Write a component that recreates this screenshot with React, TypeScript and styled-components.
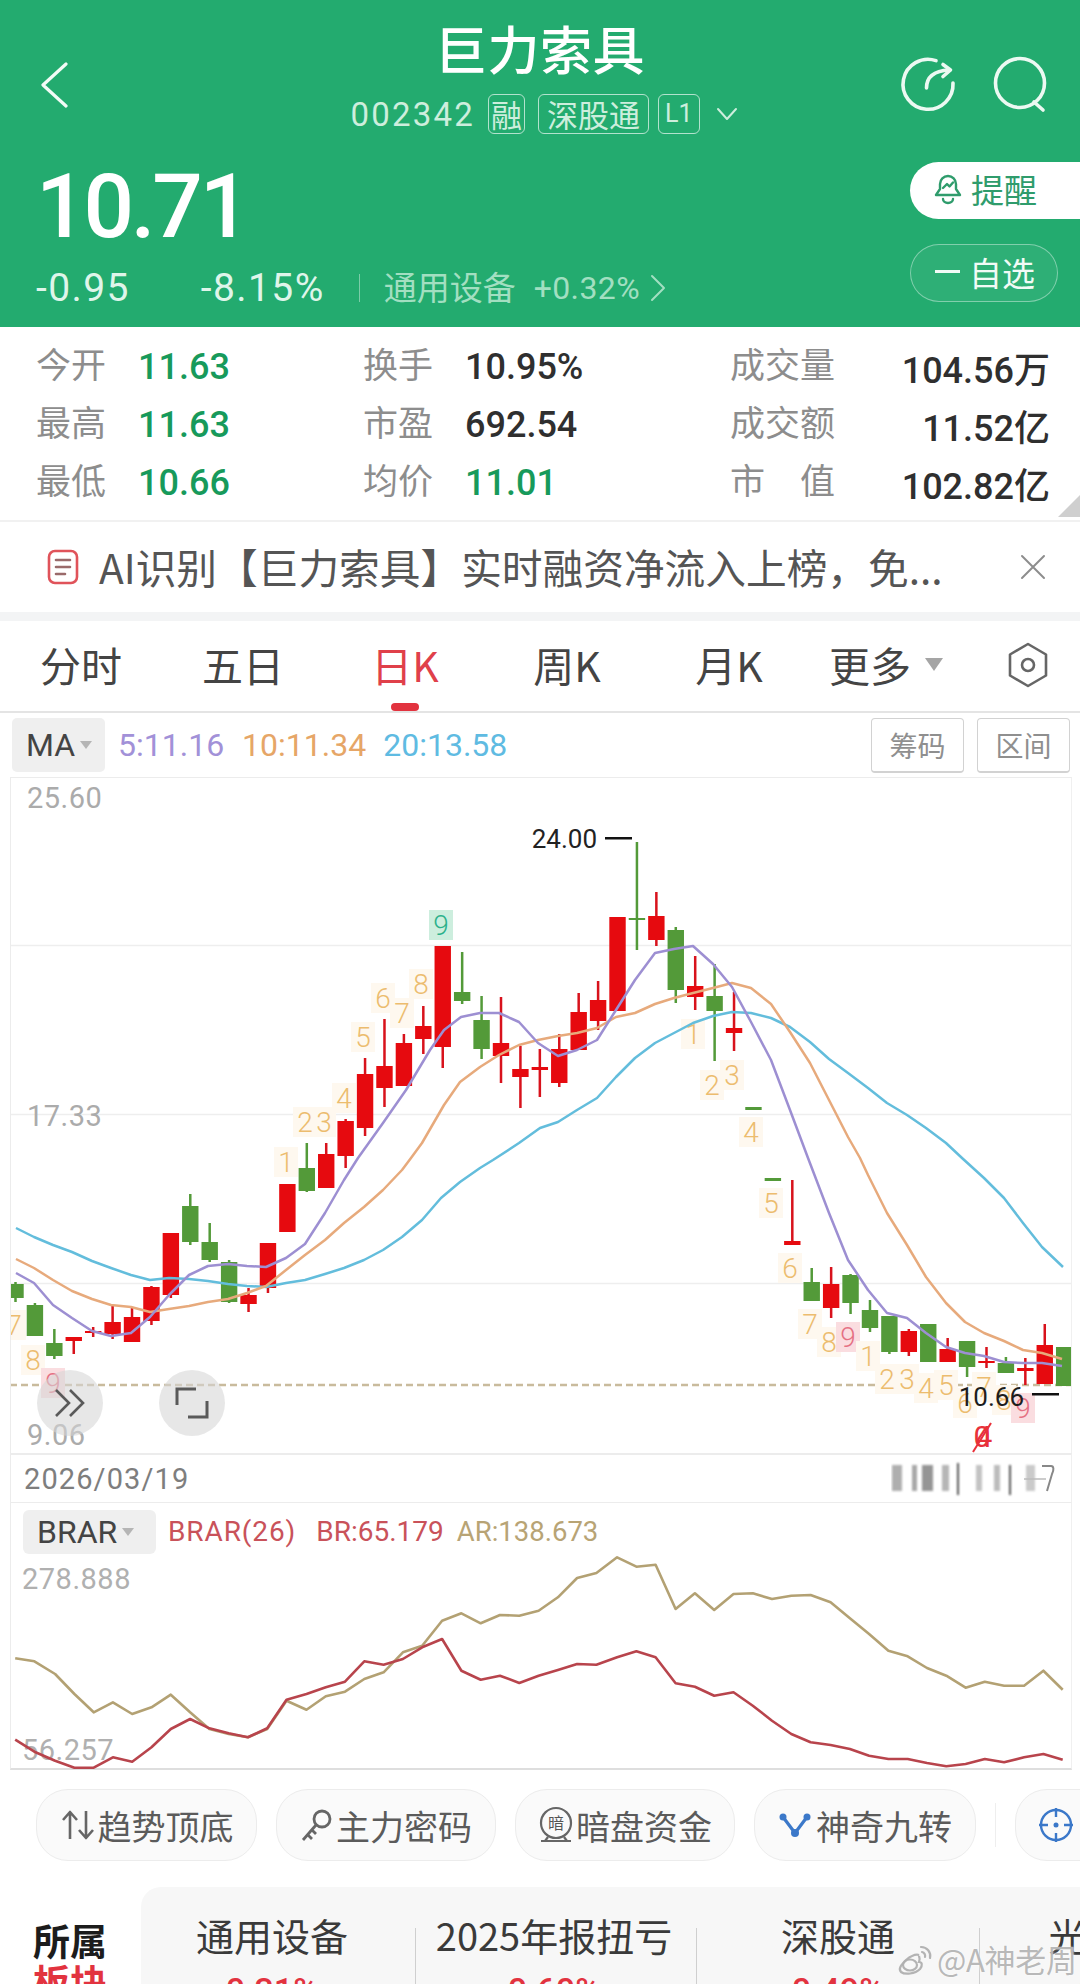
import React from 'react';
import styled, { createGlobalStyle } from 'styled-components';

const CJK = `"Noto Sans CJK SC", "Noto Sans", sans-serif`;
const NUM = `Roboto, "Noto Sans CJK SC", sans-serif`;

const Global = createGlobalStyle`
  html, body { margin: 0; padding: 0; background: #fff; }
  * { box-sizing: border-box; }
`;

const Page = styled.div`
  position: relative;
  width: 1080px;
  height: 1984px;
  overflow: hidden;
  background: #fff;
  font-family: ${CJK};
  color: #333;
`;

/* ---------- header ---------- */
const Header = styled.header`
  height: 327px;
  background: #23ab6f;
  color: #fff;
  display: flex;
  flex-direction: column;
`;
const TopBar = styled.div`
  height: 150px;
  display: grid;
  grid-template-columns: 1fr auto 1fr;
`;
const BackCell = styled.div`
  padding: 62px 0 0 40px;
`;
const TitleBlock = styled.div`
  padding-top: 18px;
  display: flex;
  flex-direction: column;
  align-items: center;
`;
const Title = styled.div`
  font-size: 52px;
  line-height: 60px;
  font-weight: 500;
  letter-spacing: 0.5px;
`;
const SubRow = styled.div`
  margin: 16px 0 0 8px;
  height: 40px;
  display: flex;
  align-items: center;
  gap: 11px;
  color: #cdeedd;
`;
const Code = styled.span`
  font-family: ${NUM};
  font-size: 33px;
  letter-spacing: 2.2px;
  margin-right: 2px;
`;
const Badge = styled.span`
  height: 40px;
  padding: 0 2px;
  border: 1px solid rgba(255, 255, 255, 0.65);
  border-radius: 6px;
  font-size: 31px;
  line-height: 36px;
  font-family: ${CJK};
  display: flex;
  align-items: center;
`;
const WideBadge = styled(Badge)`
  margin-left: 2px;
  padding: 0 8px;
`;
const L1Badge = styled(Badge)`
  margin-left: -2px;
  font-family: ${NUM};
  font-size: 25px;
  padding: 0 6px;
`;
const ActionCell = styled.div`
  display: flex;
  justify-content: flex-end;
  align-items: flex-start;
  gap: 34px;
  padding: 54px 28px 0 0;
`;
const PriceRow = styled.div`
  flex: 1;
  display: flex;
  justify-content: space-between;
`;
const PriceCol = styled.div`
  display: flex;
  flex-direction: column;
  padding: 7px 0 0 36px;
`;
const Price = styled.div`
  font-family: ${NUM};
  font-size: 89px;
  line-height: 100px;
  font-weight: 500;
  letter-spacing: -3.2px;
`;
const ChangeRow = styled.div`
  margin-top: 13px;
  display: flex;
  align-items: center;
  height: 36px;
  font-family: ${NUM};
  font-size: 39px;
  letter-spacing: 1.4px;
  color: #dff5ea;
`;
const ChangePct = styled.span`
  margin-left: 71px;
`;
const Sep = styled.span`
  width: 1px;
  height: 28px;
  background: rgba(255, 255, 255, 0.4);
  margin: 0 24px 0 34px;
`;
const Sector = styled.span`
  font-family: ${CJK};
  font-size: 33px;
  letter-spacing: 0;
  margin-bottom: 4px;
  color: #a2dfc1;
`;
const SectorPct = styled.span`
  font-size: 32px;
  letter-spacing: 0.4px;
  margin-left: 18px;
  color: #a2dfc1;
`;
const BtnCol = styled.div`
  width: 170px;
  padding-top: 12px;
  display: flex;
  flex-direction: column;
  gap: 25px;
`;
const RemindBtn = styled.div`
  height: 57px;
  background: #fff;
  border-radius: 29px 0 0 29px;
  color: #2f9c6c;
  font-size: 33px;
  line-height: 40px;
  display: flex;
  align-items: center;
  padding: 0 0 3px 22px;
  gap: 7px;
`;
const WatchBtn = styled.div`
  width: 148px;
  height: 58px;
  border: 1.5px solid rgba(255, 255, 255, 0.4);
  background: rgba(255, 255, 255, 0.05);
  border-radius: 29px;
  font-size: 33px;
  line-height: 40px;
  display: flex;
  align-items: center;
  padding: 0 0 3px 24px;
  gap: 9px;
  color: #f1fbf6;
`;
const MinusBar = styled.span`
  width: 25px;
  height: 3px;
  background: #f1fbf6;
`;

/* ---------- stats ---------- */
const Stats = styled.section`
  position: relative;
  height: 195px;
  padding: 8px 30px 0 36px;
  display: grid;
  grid-template-columns: 102px 225px 102px 265px 110px 1fr;
  grid-auto-rows: 58px;
  align-items: center;
  border-bottom: 2px solid #f1f1f1;
`;
const StatLabel = styled.span`
  font-size: 35px;
  padding-bottom: 4px;
  color: #8d8d8d;
  white-space: pre;
`;
const WideLabel = styled(StatLabel)`
  display: flex;
  justify-content: space-between;
  width: 105px;
`;
const StatValue = styled.span<{ $green?: boolean; $right?: boolean }>`
  font-family: ${NUM};
  font-size: 36px;
  font-weight: 500;
  padding-top: 5px;
  color: ${(p) => (p.$green ? '#179a5b' : '#2f2f2f')};
  text-align: ${(p) => (p.$right ? 'right' : 'left')};
  white-space: nowrap;
`;
const Corner = styled.span`
  position: absolute;
  right: 0;
  bottom: 3px;
  width: 0;
  height: 0;
  border-style: solid;
  border-width: 0 0 22px 22px;
  border-color: transparent transparent #cfcfcf transparent;
`;

/* ---------- ai notice ---------- */
const Notice = styled.section`
  height: 90px;
  display: flex;
  align-items: center;
  padding-left: 47px;
  gap: 20px;
`;
const NoticeText = styled.span`
  width: 901px;
  font-size: 40.7px;
  line-height: 52px;
  color: #555;
  white-space: nowrap;
`;
const Gap = styled.div`
  height: 9px;
  background: #f3f4f5;
`;

/* ---------- tabs ---------- */
const Tabs = styled.nav`
  height: 92px;
  display: grid;
  grid-template-columns: repeat(5, 162px) 152px 1fr;
  border-bottom: 2px solid #e4e4e4;
`;
const Tab = styled.div<{ $active?: boolean }>`
  position: relative;
  display: flex;
  align-items: center;
  justify-content: center;
  font-size: 41px;
  padding-bottom: 4px;
  gap: 14px;
  color: ${(p) => (p.$active ? '#e0404a' : '#444')};
  ${(p) =>
    p.$active
      ? `&::after{content:"";position:absolute;left:67px;bottom:0;width:28px;height:8px;border-radius:4px;background:#e2333f;}`
      : ''}
`;
const TabTri = styled.span`
  width: 0;
  height: 0;
  border-style: solid;
  border-width: 13px 9px 0 9px;
  border-color: #a5a5a5 transparent transparent transparent;
`;
const TabGear = styled.div`
  display: flex;
  align-items: center;
  justify-content: center;
  padding: 0 0 2px 14px;
`;

/* ---------- MA row ---------- */
const IndicatorRow = styled.div`
  height: 64px;
  display: flex;
  align-items: center;
  padding: 0 10px 0 12px;
`;
const Selector = styled.div<{ $w: number }>`
  width: ${(p) => p.$w}px;
  height: 54px;
  background: #efefef;
  border-radius: 5px;
  display: flex;
  align-items: center;
  padding-left: 14px;
  gap: 5px;
  font-family: ${NUM};
  font-size: 32px;
  color: #444;
`;
const SmallTri = styled.span`
  width: 0;
  height: 0;
  border-style: solid;
  border-width: 8px 6px 0 6px;
  border-color: #b5b5b5 transparent transparent transparent;
`;
const Legend = styled.span<{ $color: string; $ml: number; $size?: number; $ls?: number }>`
  font-family: ${NUM};
  font-size: ${(p) => p.$size ?? 32}px;
  letter-spacing: ${(p) => p.$ls ?? 0}px;
  color: ${(p) => p.$color};
  margin-left: ${(p) => p.$ml}px;
  white-space: nowrap;
`;
const RangeBtns = styled.div`
  margin-left: auto;
  display: flex;
  gap: 13px;
`;
const RangeBtn = styled.div`
  width: 93px;
  height: 55px;
  border: 1px solid #d2d2d2;
  border-bottom-width: 2px;
  border-radius: 4px;
  color: #8f8f8f;
  font-size: 28px;
  display: flex;
  align-items: center;
  justify-content: center;
`;

/* ---------- k chart ---------- */
const PlotFrame = styled.div`
  position: relative;
  margin-left: 10px;
  width: 1062px;
  height: 676px;
  border: 1px solid #ececec;
  border-bottom: 0;
  border-right-color: #f0f0f0;
  overflow: hidden;
`;
const PlotSvg = styled.svg`
  display: block;
  margin-top: -1px;
`;
const FloatRound = styled.div<{ $left: number }>`
  position: absolute;
  left: ${(p) => p.$left}px;
  top: 592px;
  width: 66px;
  height: 66px;
  border-radius: 50%;
  background: rgba(214, 214, 214, 0.58);
  display: flex;
  align-items: center;
  justify-content: center;
`;
const DateRow = styled.div`
  margin-left: 10px;
  width: 1062px;
  height: 50px;
  border: 1px solid #ececec;
  border-top: 2px solid #ececec;
  border-right-color: #f0f0f0;
  display: flex;
  align-items: center;
  justify-content: space-between;
  padding: 0 8px 0 13px;
`;
const DateText = styled.span`
  font-family: ${NUM};
  font-size: 29px;
  letter-spacing: 1.1px;
  color: #7e7e7e;
`;

/* ---------- brar ---------- */
const SubChart = styled.div`
  margin-left: 10px;
  width: 1062px;
  height: 267px;
  border-right: 1px solid #f0f0f0;
  border-left: 1px solid #ececec;
  border-bottom: 2px solid #dedede;
  display: flex;
  flex-direction: column;
`;
const SubHead = styled.div`
  height: 54px;
  padding: 5px 0 0 12px;
  display: flex;
  align-items: center;
`;
const BrarSelector = styled(Selector)`
  height: 44px;
  font-size: 32px;
  border-radius: 6px;
`;
const SubSvg = styled.svg`
  display: block;
  overflow: visible;
`;

/* ---------- pills ---------- */
const PillRow = styled.div`
  height: 117px;
  padding: 19px 0 0 36px;
  display: flex;
  align-items: flex-start;
  gap: 19px;
`;
const Pill = styled.div<{ $w?: number }>`
  flex: 0 0 ${(p) => p.$w ?? 221}px;
  height: 72px;
  border: 1.5px solid #ececec;
  background: #fafafa;
  border-radius: 32px;
  display: flex;
  align-items: center;
  justify-content: center;
  gap: 2px;
  font-size: 34px;
  color: #5b5b5b;
  white-space: nowrap;
`;
const PillSep = styled.span`
  flex: none;
  width: 1px;
  height: 44px;
  margin: 14px 0 0 0;
  background: #eee;
`;
const LastPill = styled(Pill)`
  justify-content: flex-start;
  padding-left: 22px;
`;

/* ---------- bottom ---------- */
const Bottom = styled.section`
  display: flex;
  height: 97px;
`;
const SideHead = styled.div`
  flex: 0 0 141px;
  padding: 33px 0 0 33px;
  font-size: 37px;
  line-height: 41px;
  font-weight: 700;
  color: #1c1c1c;
`;
const SideRed = styled.span`
  display: block;
  color: #e2333f;
`;
const Panel = styled.div`
  flex: 1;
  display: flex;
  background: #f7f7f7;
  border-top-left-radius: 20px;
  overflow: hidden;
`;
const Concept = styled.div<{ $w: number; $first?: boolean; $pr?: number }>`
  flex: 0 0 ${(p) => p.$w}px;
  margin-top: 41px;
  height: 60px;
  padding-right: ${(p) => p.$pr ?? 0}px;
  text-align: center;
  border-left: ${(p) => (p.$first ? '0' : '1px solid #cfcfcf')};
`;
const ConceptName = styled.div`
  font-size: 38px;
  line-height: 14px;
  color: #3a3a3a;
  white-space: nowrap;
`;
const ConceptValue = styled.div`
  margin-top: 22px;
  font-family: ${NUM};
  font-weight: 500;
  font-size: 34px;
  line-height: 52px;
  color: #e2333f;
`;
const Watermark = styled.div`
  position: absolute;
  left: 895px;
  top: 1941px;
  display: flex;
  align-items: center;
  gap: 2px;
  font-size: 31px;
  line-height: 36px;
  letter-spacing: -0.3px;
  color: rgba(178, 178, 178, 0.92);
  text-shadow: 0 0 2px rgba(255, 255, 255, 0.9);
  white-space: nowrap;
`;

/* ---------- data ---------- */
const X0 = 15.5;
const DX = 19.42;
type C = ['r' | 'g', number, number, number, number];
const candles: C[] = [
  ['g', 1282, 1284, 1298, 1302], ['g', 1303, 1305, 1336, 1336], ['g', 1329, 1343, 1356, 1359],
  ['r', 1337, 1337, 1341, 1354], ['r', 1327, 1331, 1333, 1337], ['r', 1305, 1322, 1334, 1339],
  ['r', 1308, 1317, 1342, 1342], ['r', 1286, 1287, 1321, 1325], ['r', 1233, 1233, 1295, 1298],
  ['g', 1194, 1206, 1242, 1245], ['g', 1223, 1242, 1260, 1262], ['g', 1260, 1262, 1302, 1303],
  ['r', 1288, 1295, 1304, 1312], ['r', 1243, 1243, 1288, 1293], ['r', 1184, 1184, 1232, 1232],
  ['g', 1143, 1168, 1191, 1192], ['r', 1143, 1154, 1188, 1188], ['r', 1119, 1121, 1156, 1168],
  ['r', 1058, 1074, 1128, 1136], ['r', 1019, 1066, 1088, 1107], ['r', 1034, 1043, 1086, 1086],
  ['r', 1006, 1026, 1039, 1054], ['r', 946, 946, 1047, 1068], ['g', 952, 992, 1001, 1004],
  ['g', 996, 1020, 1049, 1059], ['r', 997, 1043, 1056, 1083], ['r', 1046, 1069, 1077, 1108],
  ['r', 1049, 1067, 1070, 1097], ['r', 1034, 1049, 1083, 1087], ['r', 993, 1012, 1050, 1050],
  ['r', 981, 1000, 1021, 1030], ['r', 917, 917, 1011, 1011], ['g', 842, 918, 920, 950],
  ['r', 892, 916, 940, 946], ['g', 927, 930, 990, 1003], ['r', 956, 986, 997, 1010],
  ['g', 964, 996, 1011, 1061], ['r', 992, 1028, 1033, 1051], ['g', 1107, 1107, 1110, 1110],
  ['g', 1178, 1178, 1181, 1181], ['r', 1180, 1241, 1245, 1245], ['g', 1268, 1282, 1301, 1301],
  ['r', 1267, 1284, 1308, 1318], ['g', 1274, 1275, 1303, 1314], ['g', 1300, 1310, 1328, 1332],
  ['g', 1316, 1316, 1352, 1354], ['r', 1329, 1331, 1352, 1356], ['g', 1324, 1324, 1362, 1362],
  ['r', 1338, 1349, 1362, 1362], ['g', 1341, 1341, 1367, 1377], ['r', 1347, 1361, 1363, 1368],
  ['g', 1357, 1363, 1373, 1373], ['r', 1358, 1368, 1371, 1385], ['r', 1324, 1345, 1384, 1384],
  ['g', 1347, 1347, 1386, 1386],
];
const pts = (a: number[]) => {
  const out: string[] = [];
  for (let i = 0; i < a.length; i += 2) out.push(`${a[i]},${a[i + 1]}`);
  return out.join(' ');
};
const ma5 = [16,1273,34,1283,53,1305,72,1318,92,1331,111,1336,131,1333,150,1317,169,1295,189,1275,208,1266,228,1264,247,1266,266,1267,286,1258,305,1244,325,1213,344,1180,358,1158,383,1123,406,1090,430,1050,444,1030,461,1017,480,1013,499,1013,519,1022,538,1043,558,1056,577,1050,597,1040,616,1010,635,980,655,953,674,949,693,946,713,964,732,987,751,1022,771,1060,790,1110,808,1158,829,1213,848,1260,868,1290,887,1313,907,1318,926,1333,946,1347,965,1353,984,1356,1004,1362,1023,1363,1042,1363,1062,1366];
const ma10 = [16,1259,34,1268,53,1280,72,1291,92,1299,111,1305,131,1307,150,1312,169,1309,189,1306,208,1302,228,1299,247,1293,266,1286,286,1270,305,1255,325,1240,344,1223,364,1207,383,1190,402,1170,411,1158,422,1143,444,1105,460,1082,480,1067,499,1055,519,1045,538,1040,558,1036,577,1033,597,1028,616,1017,635,1013,655,1004,674,998,693,993,713,988,732,983,751,988,771,1004,790,1032,810,1063,829,1100,848,1137,860,1158,868,1175,887,1213,907,1245,926,1277,946,1303,965,1322,984,1333,1004,1341,1023,1350,1042,1353,1062,1359];
const ma20 = [16,1228,34,1237,53,1245,72,1252,92,1261,111,1268,131,1275,150,1280,169,1278,189,1279,208,1281,228,1284,247,1286,266,1287,286,1283,305,1280,325,1274,344,1268,364,1260,383,1250,402,1237,422,1220,441,1198,460,1182,480,1168,493,1160,519,1143,540,1128,558,1122,577,1110,597,1098,616,1077,635,1058,655,1043,674,1033,693,1023,713,1016,732,1012,751,1013,771,1018,790,1027,810,1042,829,1059,848,1073,868,1088,887,1103,907,1115,926,1128,946,1143,962,1158,984,1178,1004,1198,1023,1223,1042,1247,1063,1267];

type L = [string, number, number, 'o' | 'p' | 'g'];
const labels: L[] = [
  ['7', 14, 1325, 'o'], ['8', 33, 1360, 'o'], ['9', 53, 1383, 'p'],
  ['1', 286, 1162, 'o'], ['2', 305, 1122, 'o'], ['3', 324, 1122, 'o'], ['4', 344, 1098, 'o'],
  ['5', 363, 1037, 'o'], ['6', 383, 998, 'o'], ['7', 402, 1013, 'o'], ['8', 421, 984, 'o'], ['9', 441, 925, 'g'],
  ['1', 693, 1034, 'o'], ['2', 712, 1085, 'o'], ['3', 732, 1075, 'o'], ['4', 751, 1132, 'o'],
  ['5', 771, 1203, 'o'], ['6', 790, 1268, 'o'], ['7', 810, 1324, 'o'], ['8', 829, 1342, 'o'], ['9', 848, 1337, 'p'],
  ['1', 868, 1356, 'o'], ['2', 887, 1379, 'o'], ['3', 907, 1379, 'o'], ['4', 926, 1388, 'o'], ['5', 946, 1385, 'o'],
  ['6', 965, 1403, 'o'], ['7', 984, 1387, 'o'], ['8', 1004, 1400, 'o'], ['9', 1023, 1408, 'p'],
];
const labelStyle = {
  o: { bg: '#fef8ef', fg: '#ecbc6e' },
  p: { bg: '#fadde0', fg: '#e57083' },
  g: { bg: '#cdeede', fg: '#2cb18b' },
};
const arZ = [22,478,50,487,80,525,108,585,136,640,164,610,192,645,220,625,248,587,276,640,304,690,332,705,360,715,388,690,416,605,445,632,473,592,501,578,529,540,557,520,585,460,613,440,642,365,670,343,698,373,726,348,754,350,782,335,810,295,838,237,866,222,896,175,924,203,952,197,981,330,1009,283,1037,333,1065,285,1093,283,1121,300,1149,290,1177,288,1206,310,1234,358,1262,405,1290,455,1318,472,1346,507,1374,530,1402,566,1430,548,1458,560,1487,560,1515,515,1543,572];
const brZ = [22,722,50,758,80,785,108,806,136,806,164,775,192,788,220,745,248,690,276,660,304,688,332,703,360,715,388,688,416,602,445,585,473,565,501,548,529,487,557,497,585,480,613,445,642,420,670,515,698,542,726,530,754,552,782,530,810,513,838,495,866,497,896,475,924,457,952,475,981,553,1009,563,1037,590,1065,580,1093,620,1121,665,1149,705,1177,730,1206,738,1234,750,1262,770,1290,780,1318,780,1346,792,1374,802,1402,795,1430,780,1458,790,1487,775,1515,765,1543,782];
const zoomPts = (a: number[]) => {
  const out: number[] = [];
  for (let i = 0; i < a.length; i += 2) out.push(+(a[i] / 1.452).toFixed(1), +(1500 + a[i + 1] / 3).toFixed(1));
  return pts(out);
};

const Axis: React.FC<{ x: number; y: number; children: React.ReactNode; fill?: string }> = ({ x, y, children, fill }) => (
  <text x={x} y={y} fontFamily="Roboto, sans-serif" fontSize="29" fill={fill ?? '#ababab'} letterSpacing="0.5">
    {children}
  </text>
);

const KChart = () => (
  <PlotSvg width={1060} height={676} viewBox="11 777 1060 676">
    {[945.5, 1114.5, 1283.5].map((y) => (
      <line key={y} x1={10} x2={1072} y1={y} y2={y} stroke="#eeeeee" strokeWidth={1.5} />
    ))}
    <line x1={10} x2={1072} y1={1385} y2={1385} stroke="#c9bb9d" strokeWidth={2.5} strokeDasharray="7 4" />
    <Axis x={27} y={808}>25.60</Axis>
    <Axis x={27} y={1126}>17.33</Axis>
    <Axis x={27} y={1445}>9.06</Axis>
    {labels.map(([t, x, y, k], i) => (
      <g key={i}>
        <rect x={x - 12} y={y - 15} width={24} height={30} fill={labelStyle[k].bg} />
        <text x={x} y={y + 10} textAnchor="middle" fontFamily="Roboto, sans-serif" fontWeight={300} fontSize="28" fill={labelStyle[k].fg}>
          {t}
        </text>
      </g>
    ))}
    {candles.map(([c, wt, bt, bb, wb], i) => {
      const x = X0 + DX * i;
      const fill = c === 'r' ? '#e60a0f' : '#539a39';
      return (
        <g key={i}>
          <rect x={x - 1.25} y={wt} width={2.5} height={wb - wt} fill={c === 'r' ? '#d8121c' : '#539a39'} />
          <rect x={x - 8.2} y={bt} width={16.4} height={bb - bt} fill={fill} />
        </g>
      );
    })}
    <polyline points={pts(ma20)} fill="none" stroke="#63bddc" strokeWidth={2.5} strokeLinejoin="round" />
    <polyline points={pts(ma10)} fill="none" stroke="#e7aa7c" strokeWidth={2.5} strokeLinejoin="round" />
    <polyline points={pts(ma5)} fill="none" stroke="#9d8fd2" strokeWidth={2.5} strokeLinejoin="round" />
    <text x={597} y={848} textAnchor="end" fontFamily="Roboto, sans-serif" fontSize="26" fill="#222">24.00</text>
    <rect x={605} y={837} width={27} height={2.5} fill="#111" />
    <text x={1024} y={1406} textAnchor="end" fontFamily="Roboto, sans-serif" fontSize="26" fill="#1d1d1d">10.66</text>
    <rect x={1032} y={1393} width={27} height={2.5} fill="#111" />
    <text x={984} y={1447} textAnchor="middle" fontFamily="Roboto, sans-serif" fontSize="30" fill="#e8313a">4</text>
    <text x={982} y={1447} textAnchor="middle" fontFamily="Roboto, sans-serif" fontSize="30" fill="#e8313a">0</text>
    <path d="M973 1452L991 1423" stroke="#e8313a" strokeWidth={2} />
  </PlotSvg>
);

const BlurBars = () => (
  <svg width={172} height={36} viewBox="0 0 172 36">
    <defs>
      <filter id="bb">
        <feGaussianBlur stdDeviation="1.3" />
      </filter>
    </defs>
    <g filter="url(#bb)" fill="#7a7a7a">
      <rect x={1} y={4} width={10} height={26} opacity={0.6} />
      <rect x={21} y={4} width={5} height={26} opacity={0.65} />
      <rect x={31} y={4} width={11} height={26} opacity={0.8} />
      <rect x={51} y={4} width={7} height={26} opacity={0.55} />
      <rect x={66} y={2} width={2} height={32} fill="#555" />
      <rect x={85} y={4} width={6} height={26} opacity={0.45} />
      <rect x={103} y={4} width={6} height={26} opacity={0.5} />
      <rect x={118} y={4} width={2} height={30} fill="#555" />
      <rect x={135} y={4} width={9} height={26} opacity={0.4} />
    </g>
    <path d="M151 5h9c3 0 3 4 1 8l-5 17" fill="none" stroke="#888" strokeWidth={2} />
    <path d="M133 18h22" stroke="#bbb" strokeWidth={1.5} />
  </svg>
);

const BrarChart = () => (
  <SubSvg width={1060} height={213} viewBox="11 1557 1060 211">
    <Axis x={22} y={1590} fill="#b0b0b0">278.888</Axis>
    <Axis x={22} y={1761} fill="#b0b0b0">56.257</Axis>
    <polyline points={zoomPts(arZ)} fill="none" stroke="#b3a173" strokeWidth={2.6} strokeLinejoin="round" />
    <polyline points={zoomPts(brZ)} fill="none" stroke="#b8444c" strokeWidth={2.6} strokeLinejoin="round" />
  </SubSvg>
);

export default function App() {
  return (
    <Page>
      <Global />
      <Header>
        <TopBar>
          <BackCell>
            <svg width="28" height="46" viewBox="0 0 28 46" fill="none">
              <path d="M26 2 L3 23 L26 44" stroke="#f2fbf6" strokeWidth="3.2" strokeLinecap="round" strokeLinejoin="round" />
            </svg>
          </BackCell>
          <TitleBlock>
            <Title>巨力索具</Title>
            <SubRow>
              <Code>002342</Code>
              <Badge>融</Badge>
              <WideBadge>深股通</WideBadge>
              <L1Badge>L1</L1Badge>
              <svg width="22" height="14" viewBox="0 0 22 14" fill="none" style={{ marginLeft: 5 }}>
                <path d="M2 2 L11 12 L20 2" stroke="#cdeedd" strokeWidth="2" strokeLinecap="round" strokeLinejoin="round" />
              </svg>
            </SubRow>
          </TitleBlock>
          <ActionCell>
            <svg width="60" height="60" viewBox="0 0 60 60" fill="none" stroke="#ecf9f2" strokeWidth="3.6" strokeLinecap="round" strokeLinejoin="round">
              <path d="M38 6.6A25 25 0 1 0 55 29" />
              <path d="M28.5 34C28.5 25 33 17 51 16" />
              <path d="M45 10.5L52.5 16L45 22.5" />
            </svg>
            <svg width="60" height="60" viewBox="0 0 60 60" fill="none" stroke="#ecf9f2" strokeWidth="3.6" strokeLinecap="round">
              <circle cx="28" cy="29" r="24.5" />
              <path d="M42 48L51 56" />
            </svg>
          </ActionCell>
        </TopBar>
        <PriceRow>
          <PriceCol>
            <Price>10.71</Price>
            <ChangeRow>
              <span>-0.95</span>
              <ChangePct>-8.15%</ChangePct>
              <Sep />
              <Sector>通用设备</Sector>
              <SectorPct>+0.32%</SectorPct>
              <svg width="16" height="28" viewBox="0 0 16 28" fill="none" style={{ marginLeft: 10 }}>
                <path d="M2 2 L14 14 L2 26" stroke="#a2dfc1" strokeWidth="2" strokeLinecap="round" strokeLinejoin="round" />
              </svg>
            </ChangeRow>
          </PriceCol>
          <BtnCol>
            <RemindBtn>
              <svg width="32" height="32" viewBox="0 0 32 32" fill="none" stroke="#2f9c6c" strokeWidth="2.4" strokeLinecap="round" strokeLinejoin="round">
                <path d="M8 16V11a8 8 0 0 1 16 0v5l4 6H4z" />
                <path d="M11 26a5 4 0 0 0 10 0" />
                <path d="M11 15l4-4 2.5 2.5 3.5-4" />
              </svg>
              提醒
            </RemindBtn>
            <WatchBtn>
              <MinusBar />
              自选
            </WatchBtn>
          </BtnCol>
        </PriceRow>
      </Header>

      <Stats>
        <StatLabel>今开</StatLabel>
        <StatValue $green>11.63</StatValue>
        <StatLabel>换手</StatLabel>
        <StatValue>10.95%</StatValue>
        <StatLabel>成交量</StatLabel>
        <StatValue $right>104.56万</StatValue>
        <StatLabel>最高</StatLabel>
        <StatValue $green>11.63</StatValue>
        <StatLabel>市盈</StatLabel>
        <StatValue>692.54</StatValue>
        <StatLabel>成交额</StatLabel>
        <StatValue $right>11.52亿</StatValue>
        <StatLabel>最低</StatLabel>
        <StatValue $green>10.66</StatValue>
        <StatLabel>均价</StatLabel>
        <StatValue $green>11.01</StatValue>
        <WideLabel>
          <span>市</span>
          <span>值</span>
        </WideLabel>
        <StatValue $right>102.82亿</StatValue>
        <Corner />
      </Stats>

      <Notice>
        <svg width="32" height="36" viewBox="0 0 32 36" fill="none" stroke="#e0535a" strokeWidth="2.6" strokeLinecap="round">
          <rect x="2" y="2" width="28" height="32" rx="6" />
          <path d="M9 11h14M9 18h14M9 25h9" stroke="#9a6a6a" />
        </svg>
        <NoticeText>AI识别【巨力索具】实时融资净流入上榜，免...</NoticeText>
        <svg width="26" height="26" viewBox="0 0 26 26" fill="none" stroke="#8d8d8d" strokeWidth="2" strokeLinecap="round">
          <path d="M2 2L24 24M24 2L2 24" />
        </svg>
      </Notice>
      <Gap />

      <Tabs>
        <Tab>分时</Tab>
        <Tab>五日</Tab>
        <Tab $active>日K</Tab>
        <Tab>周K</Tab>
        <Tab>月K</Tab>
        <Tab>
          更多
          <TabTri />
        </Tab>
        <TabGear>
          <svg width="42" height="46" viewBox="0 0 42 46" fill="none" stroke="#666" strokeWidth="2.6" strokeLinejoin="round">
            <path d="M21 2L39 12.5V33.5L21 44L3 33.5V12.5Z" />
            <circle cx="21" cy="23" r="6" />
          </svg>
        </TabGear>
      </Tabs>

      <IndicatorRow>
        <Selector $w={93}>
          MA
          <SmallTri />
        </Selector>
        <Legend $color="#a291d8" $ml={13}>5:11.16</Legend>
        <Legend $color="#e6a667" $ml={18}>10:11.34</Legend>
        <Legend $color="#5fbbe2" $ml={17}>20:13.58</Legend>
        <RangeBtns>
          <RangeBtn>筹码</RangeBtn>
          <RangeBtn>区间</RangeBtn>
        </RangeBtns>
      </IndicatorRow>

      <PlotFrame>
        <KChart />
        <FloatRound $left={26}>
          <svg width="32" height="30" viewBox="0 0 32 30" fill="none" stroke="#5a5a5a" strokeWidth="2.6">
            <path d="M2 2L15 15L2 28M16 2L29 15L16 28" />
          </svg>
        </FloatRound>
        <FloatRound $left={148}>
          <svg width="34" height="34" viewBox="0 0 34 34" fill="none" stroke="#5a5a5a" strokeWidth="3">
            <path d="M2 19V3H21M32 15V31H13" />
          </svg>
        </FloatRound>
      </PlotFrame>
      <DateRow>
        <DateText>2026/03/19</DateText>
        <BlurBars />
      </DateRow>

      <SubChart>
        <SubHead>
          <BrarSelector $w={133}>
            BRAR
            <SmallTri />
          </BrarSelector>
          <Legend $color="#c9525a" $ml={12} $size={28} $ls={0.9}>BRAR(26)</Legend>
          <Legend $color="#c9525a" $ml={20} $size={28}>BR:65.179</Legend>
          <Legend $color="#b8a475" $ml={13} $size={27.5}>AR:138.673</Legend>
        </SubHead>
        <BrarChart />
      </SubChart>

      <PillRow>
        <Pill>
          <svg width="36" height="32" viewBox="0 0 36 32" fill="none" stroke="#666" strokeWidth="2.6" strokeLinejoin="round">
            <path d="M10 30V4M3 11L10 3L17 11" />
            <path d="M26 2V28M19 21L26 29L33 21" />
          </svg>
          趋势顶底
        </Pill>
        <Pill $w={220}>
          <svg width="34" height="36" viewBox="0 0 34 36" fill="none" stroke="#666" strokeWidth="2.8">
            <circle cx="22" cy="12" r="8" />
            <path d="M16 18L3 33M8 28l4 4M12 23l4 4" />
          </svg>
          主力密码
        </Pill>
        <Pill $w={220}>
          <svg width="36" height="40" viewBox="0 0 36 40" fill="none" stroke="#666" strokeWidth="2.2">
            <circle cx="18" cy="18" r="15" />
            <path d="M3 36h30M10 32l-3 4M26 32l3 4" />
            <text x="18" y="24" textAnchor="middle" fontSize="16" fill="#555" stroke="none" fontFamily={CJK}>暗</text>
          </svg>
          暗盘资金
        </Pill>
        <Pill $w={222}>
          <svg width="34" height="26" viewBox="0 0 34 26" fill="none" stroke="#3b78c9" strokeWidth="3.2" style={{ marginRight: 2 }}>
            <path d="M5 5L17 21L29 5" />
            <circle cx="5" cy="5" r="3.5" fill="#3b78c9" stroke="none" />
            <circle cx="29" cy="5" r="3.5" fill="#3b78c9" stroke="none" />
            <circle cx="17" cy="21" r="4" fill="#3b78c9" stroke="none" />
          </svg>
          神奇九转
        </Pill>
        <PillSep />
        <LastPill>
          <svg width="36" height="36" viewBox="0 0 36 36" fill="none" stroke="#3b78c9" strokeWidth="2.4">
            <circle cx="18" cy="18" r="15" />
            <path d="M18 1V10M18 26V35M1 18H10M26 18H35" />
            <circle cx="18" cy="18" r="2.5" fill="#3b78c9" stroke="none" />
          </svg>
          &nbsp;估值
        </LastPill>
      </PillRow>

      <Bottom>
        <SideHead>
          所属
          <SideRed>板块</SideRed>
        </SideHead>
        <Panel>
          <Concept $w={274} $first $pr={12}>
            <ConceptName>通用设备</ConceptName>
            <ConceptValue>0.31%</ConceptValue>
          </Concept>
          <Concept $w={281} $pr={4}>
            <ConceptName>2025年报扭亏</ConceptName>
            <ConceptValue>0.60%</ConceptValue>
          </Concept>
          <Concept $w={283}>
            <ConceptName>深股通</ConceptName>
            <ConceptValue>0.49%</ConceptValue>
          </Concept>
          <Concept $w={290}>
            <ConceptName>光伏概念</ConceptName>
            <ConceptValue>0.52%</ConceptValue>
          </Concept>
        </Panel>
      </Bottom>

      <Watermark>
        <svg width="40" height="34" viewBox="0 0 40 34" fill="none" stroke="rgba(175,175,175,0.95)" strokeWidth="2.2" strokeLinecap="round">
          <path d="M24 13c-3-1-8 1-13 5-5 5-8 9-5 12 4 3 14 2 19-3 3-4 2-7-1-7 2-4-1-7-0-7z" />
          <ellipse cx="15" cy="23" rx="7" ry="5.5" />
          <path d="M26 5a9 9 0 0 1 9 11M27 10a4 4 0 0 1 3 5" />
        </svg>
        <span>@A神老周</span>
      </Watermark>
    </Page>
  );
}
